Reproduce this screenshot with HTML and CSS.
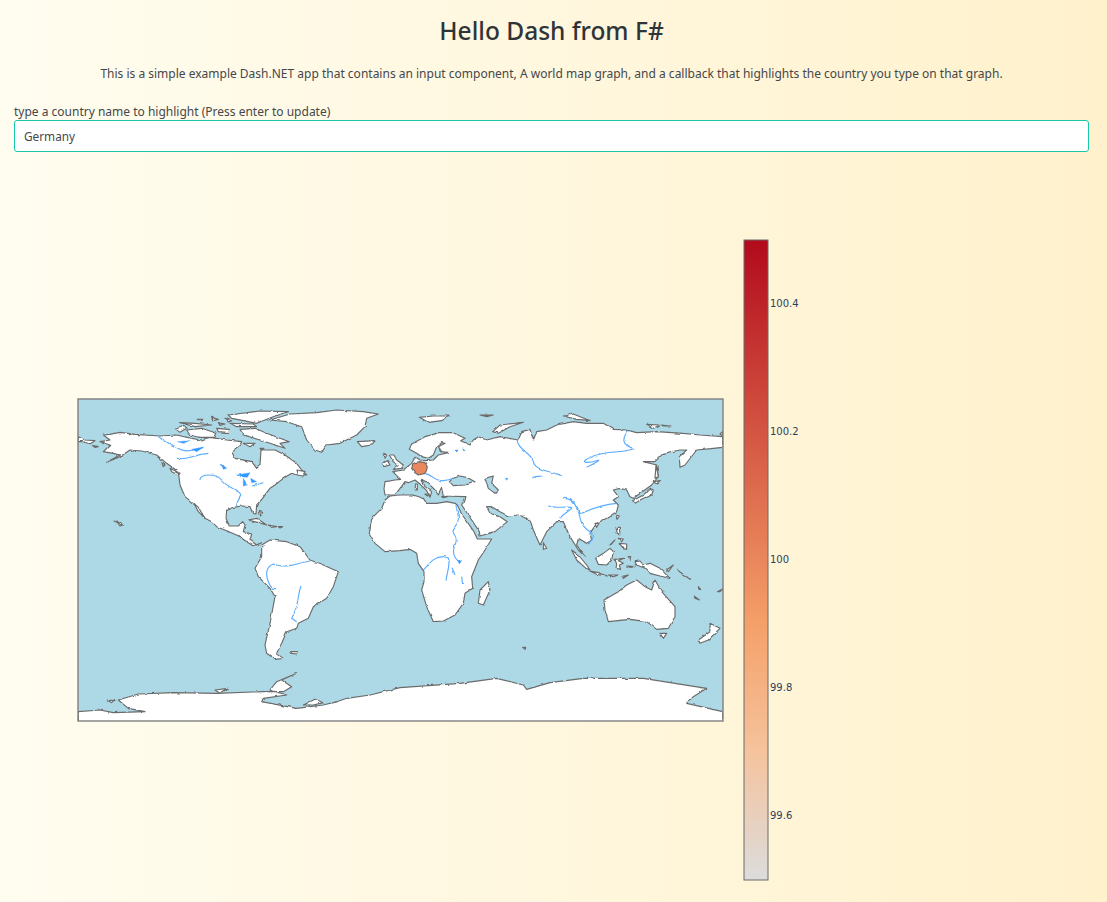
FILE: index.html
```html
<!DOCTYPE html>
<html lang="en">
<head>
<meta charset="utf-8">
<title>Hello Dash from F#</title>
<link rel="stylesheet" href="styles.css">
</head>
<body>
<main class="page">
  <h1 class="title">Hello Dash from F#</h1>
  <p class="intro">This is a simple example Dash.NET app that contains an input component, A world map graph, and a callback that highlights the country you type on that graph.</p>
  <label class="field-label" for="country">type a country name to highlight (Press enter to update)</label>
  <input class="field-input" id="country" type="text" value="Germany">
  <svg class="graph" viewBox="14 170 1075 732" role="img" aria-label="World map with Germany highlighted">
    <defs>
      <clipPath id="mapclip"><rect x="78" y="399" width="645" height="322"/></clipPath>
      <filter id="rough" x="-2%" y="-2%" width="104%" height="104%">
        <feTurbulence type="fractalNoise" baseFrequency="0.16" numOctaves="2" seed="4" result="noise"/>
        <feDisplacementMap in="SourceGraphic" in2="noise" scale="2.6" xChannelSelector="R" yChannelSelector="G" result="moved"/>
        <feGaussianBlur in="moved" stdDeviation="0.3"/>
      </filter>
      <linearGradient id="reds" x1="0" y1="1" x2="0" y2="0">
        <stop offset="0" stop-color="#dcdcdc"/>
        <stop offset="0.2" stop-color="#f5c39d"/>
        <stop offset="0.4" stop-color="#f5a069"/>
        <stop offset="1" stop-color="#b20a1c"/>
      </linearGradient>
    </defs>
    <rect class="ocean" x="78" y="399" width="645" height="322"/>
    <g clip-path="url(#mapclip)">
    <g class="rough">
      <!-- Western hemisphere: coordinates are 3x page pixels from (70,390) -->
      <g transform="translate(70 390) scale(.33333)">
        <path class="land" d="M120,133 150,127 195,133 270,138 320,135 355,143 390,150 420,142 470,150 515,155 510,165 485,185 495,205 545,215 560,235 570,225 573,180 615,180 645,195 680,220 695,240 710,255 680,255 665,250 640,265 615,285 600,295 588,310 578,325 560,345 558,372 548,370 540,350 515,348 490,352 470,360 468,385 478,408 505,408 518,395 525,405 520,425 545,432 540,450 560,465 575,458 550,468 530,455 505,437 470,422 440,410 425,395 405,385 375,345 345,320 330,285 325,245 290,220 260,195 215,183 180,180 150,200 110,217 150,195 130,190 100,185 120,165 90,155 120,150 100,135Z"/>
        <path class="land" d="M372,340 385,352 405,385 385,365Z"/>
        <path class="land" d="M25,140 45,150 75,152 60,162 40,155 25,155Z M68,167 85,170 75,172Z M275,218 285,225 280,230Z M300,235 330,250 325,255 305,245Z"/>
        <path class="land" d="M535,390 560,385 590,405 565,398Z M595,405 620,410 600,412Z M568,365 578,367 572,378Z M625,410 638,410 630,414Z M132,390 145,397 158,405 150,408 145,400Z"/>
        <path class="land" d="M510,118 555,115 590,130 630,145 658,155 630,160 645,175 600,160 570,150 520,135Z M350,120 395,115 440,130 435,142 390,142 360,135Z M315,115 335,108 350,115 330,127Z M330,98 375,100 425,105 375,110Z M475,75 570,63 655,65 610,80 560,100 520,92 485,85Z M480,100 550,102 560,110 500,110Z M440,115 475,118 475,128 445,125Z M382,88 400,88 390,95Z M425,82 445,88 430,92Z M445,98 465,102 450,106Z M465,85 485,92 475,96Z M520,160 555,160 540,170Z M570,175 582,175 575,180Z M678,240 708,245 700,258 682,255Z"/>
        <path class="land" d="M600,90 660,72 740,68 800,60 880,65 925,72 890,85 885,110 860,135 810,160 770,165 755,187 735,180 710,150 695,110 650,95Z"/>
        <path class="land" d="M862,155 915,152 905,165 875,170Z"/>
        <path class="land" d="M575,465 600,450 650,455 690,470 720,510 760,525 805,545 790,590 770,625 730,650 715,685 685,700 680,715 650,725 635,760 620,790 640,805 615,808 590,790 585,765 600,700 615,620 600,595 565,560 555,535 575,500Z"/>
        <path class="land" d="M662,785 682,785 678,792 665,790Z"/>
        <path class="land" d="M25,965 90,960 130,968 225,965 175,955 145,930 205,912 310,908 440,910 575,905 640,905 665,890 635,870 680,850 620,875 600,900 650,915 580,925 575,935 680,955 760,945 800,935 830,925 900,915 990,893 1170,880 1280,865 1360,885 1370,898 1440,878 1540,865 1720,865 1910,895 1870,920 1850,940 1958,965 1958,1000 25,1000Z"/>
        <path class="land" d="M112,930 132,932 125,938Z M700,945 735,928 760,938 730,945Z M435,900 475,895 450,910Z"/>
        <path class="river" d="M265,140C280,150 305,165 330,178S385,175 400,172M320,205C355,212 360,195 415,190M390,270C388,250 440,250 455,270S500,300 510,310 498,330 500,348M720,513C670,525 640,535 610,522 590,530 585,550 595,575S610,595 618,596M693,588C680,620 690,640 665,685L680,695"/>
        <path class="lake" d="M322,155 358,152 340,160Z M365,178 400,172 380,185Z M453,220 470,235 460,238Z M500,255 540,248 532,262 510,260Z M520,265 532,285 520,288Z M542,265 560,275 545,278Z M545,288 580,277 555,288Z"/>
      </g>
      <!-- Eastern hemisphere: coordinates are 3x page pixels from (400,390) -->
      <g transform="translate(400 390) scale(.33333)">
        <path class="land" d="M-30,318 0,315 40,315 70,325 80,340 110,340 140,335 165,340 172,345 185,372 222,425 232,447 275,447 255,480 235,510 215,560 218,595 195,610 190,640 165,675 130,693 100,695 80,650 65,600 72,575 72,545 55,520 50,490 30,478 0,482 -45,485 -75,460 -92,430 -85,385 -55,355 -45,330Z"/>
        <path class="land" d="M-48,297 -45,275 -15,270 2,268 -22,245 10,240 35,220 42,208 48,202 60,210 75,212 100,210 115,195 145,188 125,185 115,170 135,160 125,158 110,170 100,195 85,205 65,200 50,190 28,178 35,162 75,140 115,128 160,128 195,145 182,152 210,165 220,150 235,140 260,150 300,140 355,150 365,125 390,118 400,150 410,125 440,120 470,105 520,95 560,100 610,100 640,118 680,120 710,128 770,125 850,130 900,135 968,140 968,172 940,175 890,180 855,225 840,232 838,200 860,180 840,180 790,190 765,215 730,215 770,225 775,260 755,285 700,325 690,320 680,300 660,295 640,300 655,320 640,330 655,345 650,365 620,385 590,400 570,430 575,450 560,460 535,445 530,465 555,500 535,480 510,440 490,395 470,395 440,425 420,465 400,420 390,390 355,375 325,378 300,365 275,350 260,350 270,370 300,380 322,395 285,425 240,438 238,425 205,375 185,345 195,320 130,318 125,295 115,315 105,300 85,280 65,268 75,290 95,305 90,322 80,302 60,282 45,270 25,278 15,275 -2,298 -15,315 -45,315Z"/>
        <path class="land" d="M-32,195 -18,195 -10,210 10,225 5,235 -20,238 -5,225 -20,215Z M-52,220 -38,212 -30,225 -48,230Z M-52,190 -40,195 -45,205Z M46,282 52,282 52,300 46,300Z M75,312 88,312 82,318Z M125,320 142,320 130,323Z"/>
        <path class="water" d="M148,275 160,265 180,258 200,262 225,275 195,285 160,287Z M255,265 280,258 275,280 295,300 285,310 265,295Z"/>
        <path class="germany" d="M35,235 38,222 45,218 60,215 75,218 82,230 80,240 75,250 55,255 45,248Z"/>
        <path class="land" d="M58,82 100,78 148,78 125,92 85,97Z M240,75 280,75 260,80Z M278,125 300,105 370,97 330,110 295,130Z M490,78 520,72 570,92 530,88Z M740,103 780,105 760,115Z M785,105 810,108 790,108Z M968,125 960,132 968,138Z"/>
        <path class="land" d="M515,480 535,495 560,525 570,540 558,535 530,510Z M570,543 595,548 622,558 590,553Z M587,505 610,490 630,475 640,485 635,510 620,525 595,523Z M645,508 672,505 655,512 670,520 658,525 662,538 648,535 650,522Z M648,412 658,412 660,435 652,430Z M658,460 680,462 680,478 670,476Z M655,445 670,447 665,455Z M705,515 720,513 730,525 750,520 780,535 810,565 780,558 750,550 735,535 710,525Z M698,332 730,315 750,295 760,300 755,315 730,325 705,340Z M760,275 780,272 770,282Z M768,225 775,260 765,265Z M650,375 658,378 650,390Z M585,400 597,400 590,412Z M430,458 440,475 430,478Z M265,575 270,600 250,645 235,640 240,600Z M612,630 655,605 680,585 710,570 735,590 755,600 765,570 785,605 825,650 825,680 805,715 770,718 740,695 690,688 625,695 615,660Z M780,730 800,730 790,745Z M930,700 960,715 925,750 900,760 895,750 930,725Z M368,772 380,772 375,778Z M630,465 645,450 635,462Z M685,500 692,500 690,512Z M680,528 705,530 690,532Z M625,555 655,555 640,560Z M665,560 685,555 670,565Z M800,540 820,525 805,545Z M830,538 870,568 845,550Z M895,590 902,598 897,598Z M882,618 898,630 885,625Z M952,605 968,597 960,605Z"/>
        <path class="river" d="M75,250C100,255 105,275 125,272 140,270 150,272 158,262M168,345C170,370 185,385 165,410S180,430 165,465 178,515 178,515M70,540C90,520 100,500 130,500S142,540 138,572M155,530 165,555M185,560 188,585M352,150C350,175 395,190 400,215S440,240 485,257M685,122C665,145 665,165 700,175 680,190 620,180 575,200S565,220 590,212 560,232 560,232M397,265C400,258 415,260 425,258M445,347C460,355 490,350 510,352S485,370 482,385M490,325C520,325 525,345 540,370M510,325C530,335 530,375 545,370S590,345 650,340M535,360C540,390 545,410 570,425S565,460 565,460"/>
        <path class="lake" d="M172,510 185,512 178,522Z M165,180 176,180 170,186Z M188,176 196,182 190,182Z M316,265 324,265 320,271Z"/>
      </g>
    </g>
    </g>
    <rect class="frame" x="78" y="399" width="645" height="322"/>
    <rect class="colorbar" x="744" y="240" width="24" height="640" fill="url(#reds)"/>
    <g class="ticks">
      <text x="770" y="307">100.4</text>
      <text x="770" y="435">100.2</text>
      <text x="770" y="563">100</text>
      <text x="770" y="691">99.8</text>
      <text x="770" y="819">99.6</text>
    </g>
  </svg>
</main>
</body>
</html>
```
FILE: styles.css
```css
* { box-sizing: border-box; }
html, body { margin: 0; height: 100%; }
body {
  overflow: hidden;
  font-family: "Noto Sans", "Open Sans", sans-serif;
  color: #45474a;
  background: linear-gradient(to right, #fffdf0 0%, #fff1cc 100%);
}
.page { display: flex; flex-direction: column; padding: 0 18px 0 14px; }
.title {
  margin: 15px 0 0;
  font-size: 24.5px;
  line-height: 32px;
  font-weight: 500;
  text-align: center;
  color: #2f3438;
}
.intro {
  margin: 18px 0 0;
  font-size: 12px;
  line-height: 18px;
  text-align: center;
}
.field-label { margin-top: 20px; font-size: 12px; line-height: 18px; height: 17px; }
.field-input {
  height: 32px;
  padding: 0 9px;
  font: inherit;
  font-size: 11.8px;
  color: #45474a;
  background: #fff;
  border: 1px solid #17c9a8;
  border-radius: 3px;
  outline: none;
}
.graph { display: block; width: 1075px; height: 732px; margin-top: 18px; }
.ocean { fill: #add8e6; }
.frame { fill: none; stroke: #7f7f7f; stroke-width: 1.4; }
.rough { filter: url(#rough); }
.land { fill: #fff; stroke: #6a6a6a; stroke-width: 3.4; stroke-linejoin: round; }
.water { fill: #add8e6; stroke: #6a6a6a; stroke-width: 3.4; stroke-linejoin: round; }
.germany { fill: #ea875c; stroke: #6a6a6a; stroke-width: 3.4; stroke-linejoin: round; }
.river { fill: none; stroke: #5aacff; stroke-width: 3.4; }
.lake { fill: #3399ff; stroke: #3399ff; stroke-width: 1; stroke-linejoin: round; }
.colorbar { stroke: #6b6b6b; stroke-width: 1; }
.ticks { font-family: "DejaVu Sans", Verdana, sans-serif; font-size: 10px; fill: #2a3f5f; }
```
